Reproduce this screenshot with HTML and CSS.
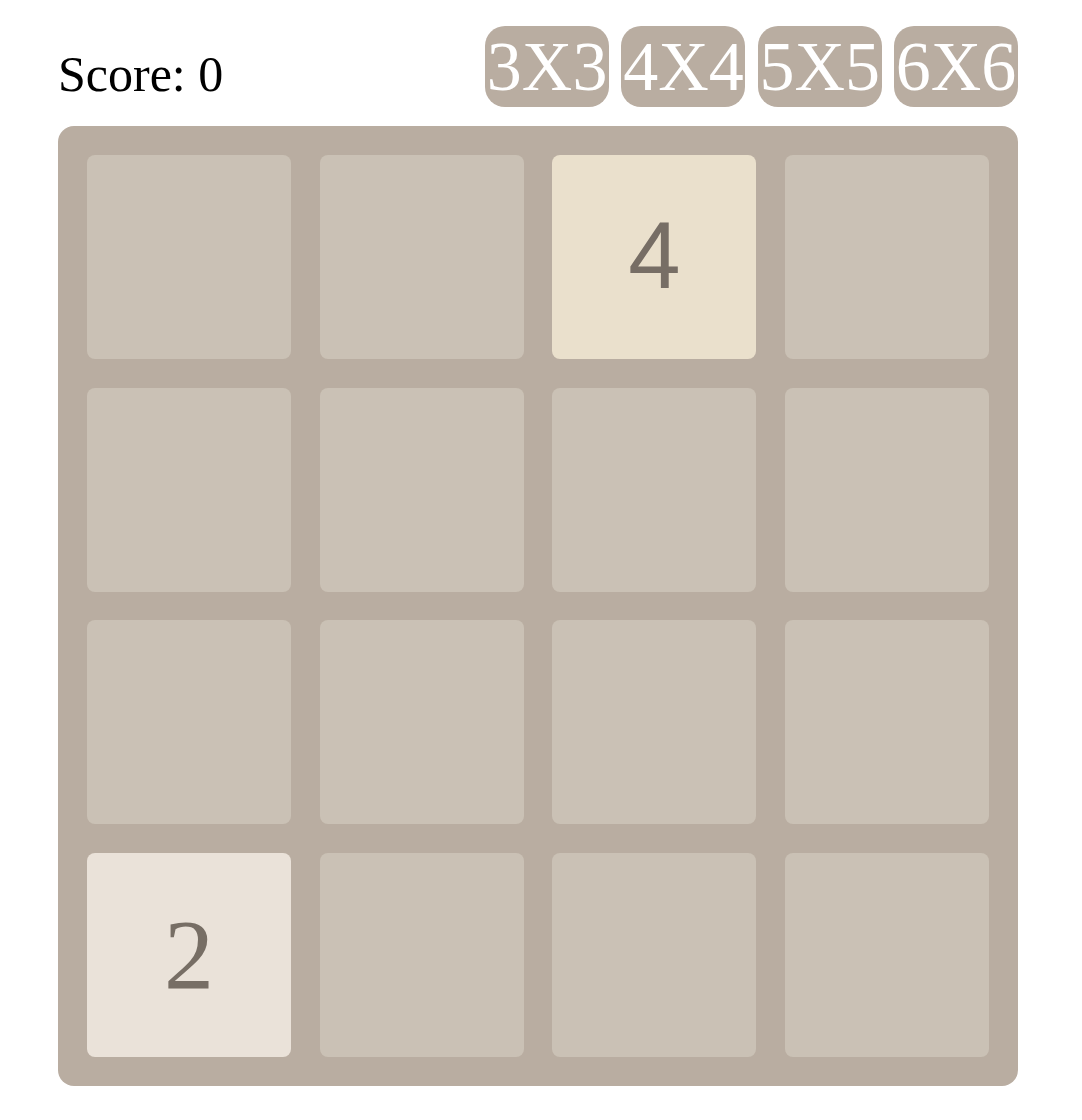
FILE: index.html
```html
<!DOCTYPE html>
<html lang="en">
<head>
    <meta charset="UTF-8">
    <title>2048</title>
    <link rel="stylesheet" href="styles.css">
</head>
<body>
<div class="game">
    <header class="top">
        <div class="score">Score: <span id="score">0</span></div>
        <div class="sizes">
            <button class="size">3X3</button>
            <button class="size">4X4</button>
            <button class="size">5X5</button>
            <button class="size">6X6</button>
        </div>
    </header>
    <section class="board">
        <div class="cell"></div>
        <div class="cell"></div>
        <div class="cell tile-4">4</div>
        <div class="cell"></div>
        <div class="cell"></div>
        <div class="cell"></div>
        <div class="cell"></div>
        <div class="cell"></div>
        <div class="cell"></div>
        <div class="cell"></div>
        <div class="cell"></div>
        <div class="cell"></div>
        <div class="cell tile-2">2</div>
        <div class="cell"></div>
        <div class="cell"></div>
        <div class="cell"></div>
    </section>
</div>
</body>
</html>
```

FILE: styles.css
```css
body{
    margin: 0;
    font-family: "Liberation Serif", "Times New Roman", serif;
}
.game{
    width: 960px;
    margin: 26px 0 0 58px;
}
.top{
    display: flex;
    justify-content: space-between;
    align-items: flex-end;
}
.score{
    font-size: 50px;
    color: #000;
    margin-bottom: 4px;
}
.sizes{
    display: flex;
    gap: 12.3px;
}
.size{
    width: 124px;
    height: 81px;
    padding: 0;
    border: none;
    border-radius: 20px;
    background: #b9ada1;
    color: #fff;
    font-family: "Liberation Serif", "Times New Roman", serif;
    font-size: 70px;
    display: flex;
    align-items: center;
    justify-content: center;
    overflow: visible;
    white-space: nowrap;
}
.board{
    margin-top: 19px;
    height: 960px;
    box-sizing: border-box;
    padding: 29px;
    background: #b9ada1;
    border-radius: 16px;
    display: grid;
    grid-template-columns: repeat(4, 1fr);
    grid-template-rows: repeat(4, 1fr);
    gap: 28.67px;
}
.cell{
    background: #cac1b5;
    border-radius: 8px;
    display: flex;
    align-items: center;
    justify-content: center;
    color: #776e65;
}
.tile-2{
    background: #eae2d9;
    font-size: 100px;
}
.tile-4{
    background: #eae0cc;
    font-family: "Liberation Sans", Arial, sans-serif;
    font-size: 94px;
    padding-bottom: 3px;
}
```
